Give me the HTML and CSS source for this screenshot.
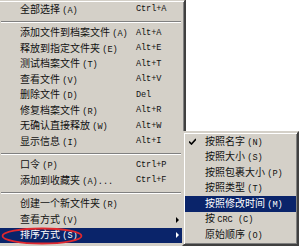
FILE: index.html
```html
<!DOCTYPE html>
<html lang="zh">
<head>
<meta charset="utf-8">
<link rel="stylesheet" href="styles.css">
</head>
<body>
<div class="menu main">
  <div class="item"><span class="label">全部选择 <span class="m">(A)</span></span><span class="key">Ctrl+A</span></div>
  <div class="sep"></div>
  <div class="item"><span class="label">添加文件到档案文件 <span class="m">(A)</span></span><span class="key">Alt+A</span></div>
  <div class="item"><span class="label">释放到指定文件夹 <span class="m">(E)</span></span><span class="key">Alt+E</span></div>
  <div class="item"><span class="label">测试档案文件 <span class="m">(T)</span></span><span class="key">Alt+T</span></div>
  <div class="item"><span class="label">查看文件 <span class="m">(V)</span></span><span class="key">Alt+V</span></div>
  <div class="item"><span class="label">删除文件 <span class="m">(D)</span></span><span class="key">Del</span></div>
  <div class="item"><span class="label">修复档案文件 <span class="m">(R)</span></span><span class="key">Alt+R</span></div>
  <div class="item"><span class="label">无确认直接释放 <span class="m">(W)</span></span><span class="key">Alt+W</span></div>
  <div class="item"><span class="label">显示信息 <span class="m">(I)</span></span><span class="key">Alt+I</span></div>
  <div class="sep"></div>
  <div class="item"><span class="label">口令 <span class="m">(P)</span></span><span class="key">Ctrl+P</span></div>
  <div class="item"><span class="label">添加到收藏夹 <span class="m">(A)...</span></span><span class="key">Ctrl+F</span></div>
  <div class="sep"></div>
  <div class="item"><span class="label">创建一个新文件夹 <span class="m">(R)</span></span></div>
  <div class="item"><span class="label">查看方式 <span class="m">(V)</span></span><span class="arrow"></span></div>
  <div class="item active"><span class="label">排序方式 <span class="m">(S)</span></span><span class="arrow"></span></div>
  <div class="item"><span class="label"></span></div>
</div>

<svg class="circle" width="84" height="20" viewBox="0 0 84 20">
  <ellipse cx="42" cy="10" rx="39.5" ry="7.5" fill="none" stroke="#e0282e" stroke-width="1.8"/>
</svg>

<div class="menu sub">
  <div class="item"><span class="check">
    <svg width="7" height="7" viewBox="0 0 7 7"><path d="M0 3.5 L2.5 6 L7 1" fill="none" stroke="#000" stroke-width="1.6"/></svg>
  </span><span class="label">按照名字 <span class="m">(N)</span></span></div>
  <div class="item"><span class="check"></span><span class="label">按照大小 <span class="m">(S)</span></span></div>
  <div class="item"><span class="check"></span><span class="label">按照包裹大小 <span class="m">(P)</span></span></div>
  <div class="item"><span class="check"></span><span class="label">按照类型 <span class="m">(T)</span></span></div>
  <div class="item active"><span class="check"></span><span class="label">按照修改时间 <span class="m">(M)</span></span></div>
  <div class="item"><span class="check"></span><span class="label">按 <span class="m">CRC (C)</span></span></div>
  <div class="item"><span class="check"></span><span class="label">原始顺序 <span class="m">(O)</span></span></div>
</div>
</body>
</html>
```
FILE: styles.css
```css
html, body {
  margin: 0;
  padding: 0;
  background: #ffffff;
  width: 300px;
  height: 246px;
  overflow: hidden;
  position: relative;
}

.menu {
  background: #d4d0c8;
  border: 2px solid;
  border-color: #d4d0c8 #404040 #404040 #d4d0c8;
  box-shadow: inset 1px 1px 0 #ffffff, inset -1px -1px 0 #808080;
  padding: 1px;
  font-family: "Noto Sans CJK SC", sans-serif;
  font-size: 10px;
  color: #111;
}

.main {
  width: 183px;
  margin: -1px 0 0 -3px;
}

.item {
  height: 15.5px;
  line-height: 15.5px;
  display: flex;
  align-items: center;
  white-space: nowrap;
}

.main .label {
  width: 116px;
  padding-left: 20px;
  flex: none;
}

.m,
.key {
  font-family: "Liberation Mono", monospace;
  font-size: 8.6px;
}

.key {
  letter-spacing: -0.1px;
}

.arrow {
  margin-left: 40px;
  width: 0;
  height: 0;
  border-left: 3px solid #000;
  border-top: 3px solid transparent;
  border-bottom: 3px solid transparent;
}

.item.active {
  background: #0a246a;
  color: #ffffff;
}

.item.active .arrow {
  border-left-color: #ffffff;
}

.sep {
  height: 8px;
  display: flex;
  align-items: center;
  padding: 0 2px 0 1px;
}

.sep::before {
  content: "";
  flex: 1;
  border-top: 1px solid #808080;
  border-bottom: 1px solid #ffffff;
  height: 0;
}

.sub {
  position: absolute;
  left: 182px;
  top: 131px;
  width: 111px;
}

.sub .check {
  width: 16px;
  padding-left: 4px;
  flex: none;
  display: flex;
  align-items: center;
}

.circle {
  position: absolute;
  left: 0;
  top: 226px;
}
```
